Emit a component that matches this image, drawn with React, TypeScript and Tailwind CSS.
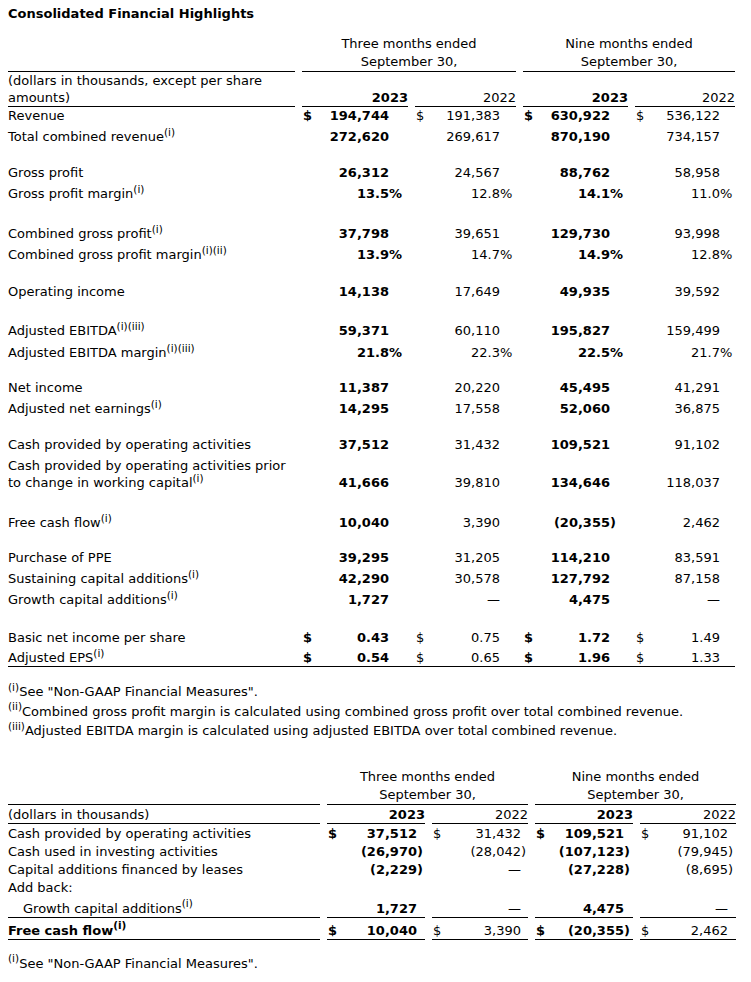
import type React from "react"
import clsx from "clsx"

type Row = { label?: string; h: string; vals?: string[]; line?: boolean; indent?: boolean; strong?: boolean }

const cell = "p-0 align-bottom leading-[17px] whitespace-nowrap"
const rule = "border-b border-black"

const highlights: Row[] = [
  { label: "Revenue", h: "h-[17px]", vals: ["$ 194,744", "$ 191,383", "$ 630,922", "$ 536,122"] },
  { label: "Total combined revenue^(i)", h: "h-[21px]", vals: ["272,620", "269,617", "870,190", "734,157"] },
  { h: "h-[18px]" },
  { label: "Gross profit", h: "h-[18px]", vals: ["26,312", "24,567", "88,762", "58,958"] },
  { label: "Gross profit margin^(i)", h: "h-[21px]", vals: ["13.5%", "12.8%", "14.1%", "11.0%"] },
  { h: "h-[19px]" },
  { label: "Combined gross profit^(i)", h: "h-[21px]", vals: ["37,798", "39,651", "129,730", "93,998"] },
  { label: "Combined gross profit margin^(i)(ii)", h: "h-[21px]", vals: ["13.9%", "14.7%", "14.9%", "12.8%"] },
  { h: "h-[19px]" },
  { label: "Operating income", h: "h-[18px]", vals: ["14,138", "17,649", "49,935", "39,592"] },
  { h: "h-[18px]" },
  { label: "Adjusted EBITDA^(i)(iii)", h: "h-[21px]", vals: ["59,371", "60,110", "195,827", "159,499"] },
  { label: "Adjusted EBITDA margin^(i)(iii)", h: "h-[22px]", vals: ["21.8%", "22.3%", "22.5%", "21.7%"] },
  { h: "h-[17px]" },
  { label: "Net income", h: "h-[18px]", vals: ["11,387", "20,220", "45,495", "41,291"] },
  { label: "Adjusted net earnings^(i)", h: "h-[21px]", vals: ["14,295", "17,558", "52,060", "36,875"] },
  { h: "h-[18px]" },
  { label: "Cash provided by operating activities", h: "h-[18px]", vals: ["37,512", "31,432", "109,521", "91,102"] },
  { label: "Cash provided by operating activities prior|to change in working capital^(i)", h: "h-[38px]", vals: ["41,666", "39,810", "134,646", "118,037"] },
  { h: "h-[19px]" },
  { label: "Free cash flow^(i)", h: "h-[21px]", vals: ["10,040", "3,390", "(20,355)", "2,462"] },
  { h: "h-[17px]" },
  { label: "Purchase of PPE", h: "h-[18px]", vals: ["39,295", "31,205", "114,210", "83,591"] },
  { label: "Sustaining capital additions^(i)", h: "h-[21px]", vals: ["42,290", "30,578", "127,792", "87,158"] },
  { label: "Growth capital additions^(i)", h: "h-[21px]", vals: ["1,727", "—", "4,475", "—"] },
  { h: "h-[20px]" },
  { label: "Basic net income per share", h: "h-[18px]", vals: ["$ 0.43", "$ 0.75", "$ 1.72", "$ 1.49"] },
  { label: "Adjusted EPS^(i)", h: "h-[20px]", vals: ["$ 0.54", "$ 0.65", "$ 1.96", "$ 1.33"] },
]

const freeCash: Row[] = [
  { label: "Cash provided by operating activities", h: "h-[18px]", vals: ["$ 37,512", "$ 31,432", "$ 109,521", "$ 91,102"] },
  { label: "Cash used in investing activities", h: "h-[18px]", vals: ["(26,970)", "(28,042)", "(107,123)", "(79,945)"] },
  { label: "Capital additions financed by leases", h: "h-[18px]", vals: ["(2,229)", "—", "(27,228)", "(8,695)"] },
  { label: "Add back:", h: "h-[18px]", vals: ["", "", "", ""] },
  { label: "Growth capital additions^(i)", h: "h-[22px]", vals: ["1,727", "—", "4,475", "—"], line: true, indent: true },
  { label: "Free cash flow^(i)", h: "h-[22px]", vals: ["$ 10,040", "$ 3,390", "$ (20,355)", "$ 2,462"], line: true, strong: true },
]

function Note({ children }: { children: React.ReactNode }) {
  return <sup className="text-[10.5px]">{children}</sup>
}

function Label({ text }: { text: string }) {
  const lines = text.split("|")
  return (
    <>
      {lines.map((ln, i) => {
        const [main, note] = ln.split("^")
        return (
          <span key={i}>
            {i > 0 && <br />}
            {main}
            {note && <Note>{note}</Note>}
          </span>
        )
      })}
    </>
  )
}

function Amount({ raw, bold, suffix }: { raw: string; bold: boolean; suffix: string }) {
  let v = raw
  let dollar = false
  let end = ""
  if (v.startsWith("$ ")) {
    dollar = true
    v = v.slice(2)
  }
  if (v.endsWith("%") || v.endsWith(")")) {
    end = v.slice(-1)
    v = v.slice(0, -1)
  }
  return (
    <div className={clsx("flex", bold && "font-bold")}>
      <span className="pl-px">{dollar ? "$" : ""}</span>
      <span className="flex-1 text-right">{v}</span>
      <span className={suffix}>{end}</span>
    </div>
  )
}

function Header({ label, colsTitle }: { label: React.ReactNode; colsTitle?: boolean }) {
  return (
    <>
      <tr className="h-[37px]">
        <td className={clsx(cell, rule)} />
        <td colSpan={2} className={clsx(cell, rule, "text-center leading-[18px]")}>
          Three months ended
          <br />
          September 30,
        </td>
        <td colSpan={2} className={clsx(cell, rule, "text-center leading-[18px]")}>
          Nine months ended
          <br />
          September 30,
        </td>
      </tr>
      <tr className={colsTitle ? "h-[35px]" : "h-[19px]"}>
        <td className={clsx(cell, rule)}>{label}</td>
        <td className={clsx(cell, rule, "text-right font-bold")}>2023</td>
        <td className={clsx(cell, rule, "text-right")}>2022</td>
        <td className={clsx(cell, rule, "text-right font-bold")}>2023</td>
        <td className={clsx(cell, rule, "text-right")}>2022</td>
      </tr>
    </>
  )
}

function Body({ rows, suffixes }: { rows: Row[]; suffixes: string[] }) {
  return (
    <>
      {rows.map((r, i) => (
        <tr key={i} className={r.h}>
          <td className={clsx(cell, r.line && rule, r.indent && "pl-[15px]", r.strong && "font-bold")}>
            {r.label && <Label text={r.label} />}
          </td>
          {r.vals
            ? r.vals.map((v, j) => (
                <td key={j} className={clsx(cell, r.line && rule)}>
                  <Amount raw={v} bold={j % 2 === 0} suffix={suffixes[j]} />
                </td>
              ))
            : [0, 1, 2, 3].map((j) => <td key={j} className={cell} />)}
        </tr>
      ))}
    </>
  )
}

export default function App() {
  return (
    <div className="min-h-screen bg-white text-black text-[13px] font-['DejaVu_Sans',Verdana,sans-serif]">
      <div className="pl-[8px] pt-[6px] leading-4 font-bold">Consolidated Financial Highlights</div>

      <table className="mt-[13px] ml-px w-[741px] table-fixed border-separate border-spacing-x-[7px] border-spacing-y-0">
        <colgroup>
          <col className="w-[287px]" />
          <col className="w-[106px]" />
          <col className="w-[101px]" />
          <col className="w-[105px]" />
          <col className="w-[100px]" />
        </colgroup>
        <tbody>
          <Header
            colsTitle
            label={
              <>
                (dollars in thousands, except per share
                <br />
                amounts)
              </>
            }
          />
          <Body rows={highlights} suffixes={["w-[19px]", "w-[16px]", "w-[18px]", "w-[15px]"]} />
          <tr>
            <td colSpan={5} className="h-px p-0 border-t border-black" />
          </tr>
        </tbody>
      </table>

      <div className="mt-[15px] pl-[8px] leading-[19.5px]">
        <p>
          <Note>(i)</Note>See "Non-GAAP Financial Measures".
        </p>
        <p>
          <Note>(ii)</Note>Combined gross profit margin is calculated using combined gross profit over total combined revenue.
        </p>
        <p>
          <Note>(iii)</Note>Adjusted EBITDA margin is calculated using adjusted EBITDA over total combined revenue.
        </p>
      </div>

      <table className="mt-[27px] ml-px w-[742px] table-fixed border-separate border-spacing-x-[7px] border-spacing-y-0">
        <colgroup>
          <col className="w-[312px]" />
          <col className="w-[98px]" />
          <col className="w-[96px]" />
          <col className="w-[98px]" />
          <col className="w-[96px]" />
        </colgroup>
        <tbody>
          <Header label="(dollars in thousands)" />
          <Body rows={freeCash} suffixes={["w-[8px]", "w-[7px]", "w-[9px]", "w-[8px]"]} />
        </tbody>
      </table>

      <p className="mt-[14px] pl-[8px] leading-[19.5px]">
        <Note>(i)</Note>See "Non-GAAP Financial Measures".
      </p>
    </div>
  )
}
